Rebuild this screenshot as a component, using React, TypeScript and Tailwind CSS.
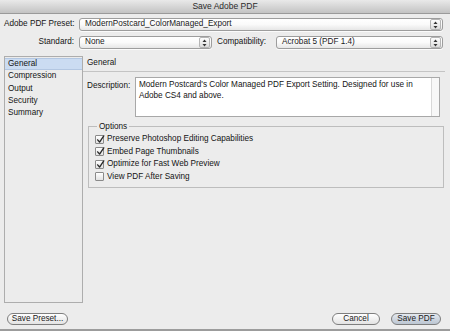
import React from 'react';

function Stepper() {
  return (
    <div className="w-[11px] h-[11px] mr-[1px] flex items-center justify-center rounded-[2px] border border-[#b5b5b5] bg-gradient-to-b from-[#fdfdfd] to-[#dcdcdc]">
      <svg width="5" height="8" viewBox="0 0 5 8">
        <path d="M2.5 0.5 L4.5 3 L0.5 3 Z" fill="#333" />
        <path d="M2.5 7.5 L4.5 5 L0.5 5 Z" fill="#333" />
      </svg>
    </div>
  );
}

function Select({ value, width }: { value: string; width: string }) {
  return (
    <div className={`${width} shrink-0 h-[13px] flex items-center rounded-[3px] border border-[#9d9d9d] bg-gradient-to-b from-white via-[#fafafa] to-[#e6e6e6] shadow-[0_1px_0_rgba(255,255,255,0.8)]`}>
      <span className="flex-1 pl-[5px] leading-none whitespace-nowrap text-[#1a1a1a]">{value}</span>
      <Stepper />
    </div>
  );
}

function Checkbox({ label, checked }: { label: string; checked: boolean }) {
  return (
    <div className="h-[12.5px] flex items-center pl-[6px] gap-[3px]">
      <div className="relative w-[9px] h-[9px] rounded-[1px] border border-[#8a8a8a] bg-gradient-to-b from-white to-[#e2e2e2]">
        {checked && (
          <svg className="absolute -top-[1px] left-[0px]" width="9" height="9" viewBox="0 0 10 10">
            <path d="M1.8 5.4 L4 7.8 L8.6 1" fill="none" stroke="#2a2a2a" strokeWidth="1.5" strokeLinecap="round" strokeLinejoin="round" />
          </svg>
        )}
      </div>
      <span className="leading-none whitespace-nowrap">{label}</span>
    </div>
  );
}

function Button({ label, width, primary }: { label: string; width: string; primary?: boolean }) {
  return (
    <div
      className={`${width} h-[12px] flex items-center justify-center rounded-full border border-[#7e7e7e] leading-none whitespace-nowrap text-[#1a1a1a] ${
        primary ? 'bg-gradient-to-b from-[#e3e8ef] to-[#bcc6d2]' : 'bg-gradient-to-b from-white to-[#e3e3e3]'
      }`}
    >
      {label}
    </div>
  );
}

const sections = ['General', 'Compression', 'Output', 'Security', 'Summary'];

export default function App() {
  return (
    <div className="w-[450px] h-[331px] flex flex-col bg-[#ececec] text-[8.2px] text-[#141414] font-['Liberation_Sans',Arial,sans-serif] overflow-hidden">
      <div className="h-[14px] flex items-center justify-center border-b border-[#9a9a9a] bg-gradient-to-b from-[#e9e9e9] to-[#c3c3c3] text-[8.5px] text-[#2a2a2a]">
        Save Adobe PDF
      </div>

      <div className="flex-1 flex flex-col px-[4px]">
        <div className="mt-[4px] h-[13px] flex items-center">
          <span className="w-[75px] shrink-0 pr-[5px] text-right whitespace-nowrap">Adobe PDF Preset:</span>
          <Select value="ModernPostcard_ColorManaged_Export" width="w-[364px]" />
        </div>

        <div className="mt-[5px] h-[13px] flex items-center">
          <span className="w-[75px] shrink-0 pr-[5px] text-right whitespace-nowrap">Standard:</span>
          <Select value="None" width="w-[133px]" />
          <span className="ml-[5px] w-[59px] shrink-0 whitespace-nowrap">Compatibility:</span>
          <Select value="Acrobat 5 (PDF 1.4)" width="w-[167px]" />
        </div>

        <div className="mt-[7px] h-[247px] flex">
          <div className="w-[79px] shrink-0 h-full border border-[#adadad] pt-[1px]">
            {sections.map((s, i) => (
              <div
                key={s}
                className={`h-[12.3px] flex items-center pl-[3px] ${i === 0 ? 'bg-[#cbdcf2] border-y border-[#b3c7e2]' : ''}`}
              >
                {s}
              </div>
            ))}
          </div>

          <div className="flex-1 flex flex-col pr-[1px]">
            <div className="h-[16px] flex items-center pl-[4px] border-b border-[#c4c4c4]">General</div>

            <div className="mt-[5px] flex">
              <span className="w-[52px] shrink-0 pl-[4px] pt-[3px] whitespace-nowrap">Description:</span>
              <div className="w-[305px] h-[40px] flex border border-[#a8a8a8] bg-white">
                <div className="flex-1 pl-[3px] pt-[1px] leading-[11px]">
                  Modern Postcard's Color Managed PDF Export Setting. Designed for use in Adobe CS4 and above.
                </div>
                <div className="w-[8px] border-l border-[#d8d8d8] bg-[#f7f7f7]" />
              </div>
            </div>

            <fieldset className="mt-[5px] ml-[5px] w-[356px] border border-[#bdbdbd] pt-[2px] pb-[4px]">
              <legend className="ml-[8px] px-[2px] leading-[9px]">Options</legend>
              <Checkbox label="Preserve Photoshop Editing Capabilities" checked />
              <Checkbox label="Embed Page Thumbnails" checked />
              <Checkbox label="Optimize for Fast Web Preview" checked />
              <Checkbox label="View PDF After Saving" checked={false} />
            </fieldset>
          </div>
        </div>

        <div className="mt-[10px] flex items-center">
          <div className="ml-[3px]">
            <Button label="Save Preset..." width="w-[61px]" />
          </div>
          <div className="ml-auto mr-[5px] flex gap-[11px]">
            <Button label="Cancel" width="w-[48px]" />
            <Button label="Save PDF" width="w-[50px]" primary />
          </div>
        </div>
      </div>

      <div className="h-[2px] bg-[#9c9c9c]" />
    </div>
  );
}
